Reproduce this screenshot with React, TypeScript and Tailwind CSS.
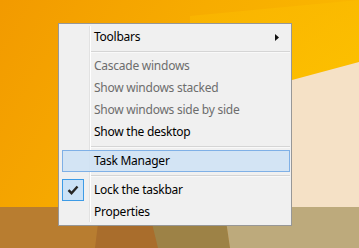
import React from "react";

const font = { fontFamily: '"Noto Sans", "Open Sans", sans-serif' };

function Row({ label, disabled, highlight, arrow, checked }: { label: string; disabled?: boolean; highlight?: boolean; arrow?: boolean; checked?: boolean }) {
  return (
    <div
      className={`relative flex h-[22px] items-center ${highlight ? "border border-[#7fb0e6] bg-[#cfe2f4]/90" : "border border-transparent"}`}
    >
      <div className="-ml-px flex h-[22px] w-[27px] shrink-0 items-center justify-start">
        {checked && (
          <div className="flex h-[22px] w-[22px] items-center justify-center border border-[#3d9be6] bg-[#cbe2f7]">
            <svg width="12" height="10" viewBox="0 0 12 10">
              <path d="M1.5 5.2 L4.5 8.2 L10.5 1.5" fill="none" stroke="#262626" strokeWidth="2.4" strokeLinejoin="miter" />
            </svg>
          </div>
        )}
      </div>
      <div className={`flex-1 pl-[5px] text-[12px] leading-none tracking-[-0.25px] ${disabled ? "text-[#6d6d6d]" : "text-black"}`}>{label}</div>
      {arrow && (
        <svg className="mr-[10px]" width="4" height="7" viewBox="0 0 4 7">
          <path d="M0 0 L4 3.5 L0 7 Z" fill="#111" />
        </svg>
      )}
    </div>
  );
}

function Sep() {
  return (
    <div className="ml-[27px] h-[7px] pt-[3px]">
      <div className="h-px bg-[#d5d5d5]" />
      <div className="h-px bg-white/60" />
    </div>
  );
}

export default function App() {
  return (
    <div className="relative h-[248px] w-[359px] overflow-hidden" style={font}>
      <svg className="absolute inset-0" width="359" height="248" viewBox="0 0 359 248">
        <defs>
          <linearGradient id="bg" x1="0" y1="0" x2="1" y2="0.4">
            <stop offset="0" stopColor="#f29a00" />
            <stop offset="0.5" stopColor="#f7ac00" />
            <stop offset="1" stopColor="#fbba00" />
          </linearGradient>
          <linearGradient id="band" x1="0" y1="0" x2="1" y2="1">
            <stop offset="0" stopColor="#fab600" />
            <stop offset="1" stopColor="#fdc300" />
          </linearGradient>
        </defs>
        <rect width="359" height="248" fill="url(#bg)" />
        <polygon points="190,16 359,0 359,62 292,80 190,40" fill="url(#band)" opacity="0.7" />
        <polygon points="292,80 359,62 359,207 292,207" fill="#f5e1c6" />
        <polygon points="0,207 359,207 359,248 0,248" fill="#b87d30" />
        <polygon points="100,207 150,207 160,248 95,248" fill="#a96d2c" />
        <polygon points="148,207 224,207 230,248 158,248" fill="#9d8246" />
        <polygon points="224,207 359,207 359,248 230,248" fill="#bdaa7c" />
      </svg>
      <div className="absolute left-[58px] top-[23px] h-[203px] w-[234px] border border-[#979797] bg-[#f0f0f0] pb-[2px] pl-[3px] pr-[1px] pt-[2px]">
        <div className="absolute bottom-[3px] left-[30px] top-[2px] w-px bg-[#e2e2e2]" />
        <div className="absolute bottom-[3px] left-[31px] top-[2px] w-px bg-white" />
        <Row label="Toolbars" arrow />
        <Sep />
        <Row label="Cascade windows" disabled />
        <Row label="Show windows stacked" disabled />
        <Row label="Show windows side by side" disabled />
        <Row label="Show the desktop" />
        <Sep />
        <Row label="Task Manager" highlight />
        <Sep />
        <Row label="Lock the taskbar" checked />
        <Row label="Properties" />
      </div>
    </div>
  );
}
